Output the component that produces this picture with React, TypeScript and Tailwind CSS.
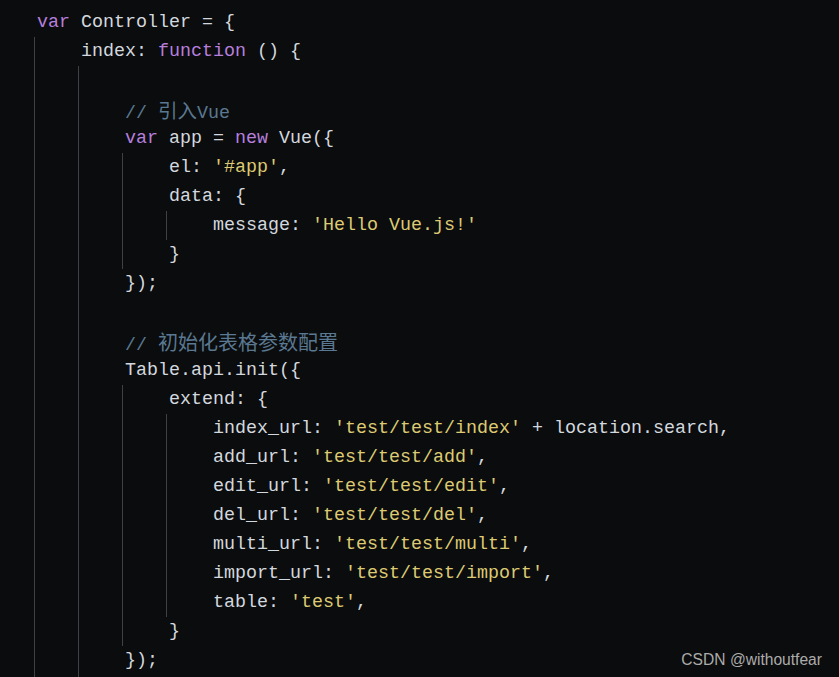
import React from "react";

type Tok = { t: string; c?: "kw" | "str" | "cm" | "cjk1" | "cjk2" };
type Line = { indent: number; toks: Tok[] };

const L = (indent: number, ...toks: Tok[]): Line => ({ indent, toks });
const p = (t: string): Tok => ({ t });
const kw = (t: string): Tok => ({ t, c: "kw" });
const s = (t: string): Tok => ({ t, c: "str" });
const cm = (t: string): Tok => ({ t, c: "cm" });

const LINES: Line[] = [
  L(0, kw("var"), p(" Controller = {")),
  L(1, p("index: "), kw("function"), p(" () {")),
  L(2),
  L(2, cm("// "), { t: "引入", c: "cjk1" }, cm("Vue")),
  L(2, kw("var"), p(" app = "), kw("new"), p(" Vue({")),
  L(3, p("el: "), s("'#app'"), p(",")),
  L(3, p("data: {")),
  L(4, p("message: "), s("'Hello Vue.js!'")),
  L(3, p("}")),
  L(2, p("});")),
  L(2),
  L(2, cm("// "), { t: "初始化表格参数配置", c: "cjk2" }),
  L(2, p("Table.api.init({")),
  L(3, p("extend: {")),
  L(4, p("index_url: "), s("'test/test/index'"), p(" + location.search,")),
  L(4, p("add_url: "), s("'test/test/add'"), p(",")),
  L(4, p("edit_url: "), s("'test/test/edit'"), p(",")),
  L(4, p("del_url: "), s("'test/test/del'"), p(",")),
  L(4, p("multi_url: "), s("'test/test/multi'"), p(",")),
  L(4, p("import_url: "), s("'test/test/import'"), p(",")),
  L(4, p("table: "), s("'test'"), p(",")),
  L(3, p("}")),
  L(2, p("});")),
  L(2),
];

const tokClass = (c?: Tok["c"]) => {
  switch (c) {
    case "kw":
      return "text-[#b67fdd]";
    case "str":
      return "text-[#ddca72]";
    case "cm":
      return "text-[#5a7891]";
    case "cjk1":
      return "text-[#5a7891] text-[19.5px] font-['Noto_Sans_CJK_SC',sans-serif]";
    case "cjk2":
      return "text-[#5a7891] text-[20px] font-['Noto_Sans_CJK_SC',sans-serif]";
    default:
      return "text-[#d3d8df]";
  }
};

export default function App() {
  return (
    <div className="relative w-[839px] h-[677px] overflow-hidden bg-[#0b0c0d] pt-[7.5px] font-['Liberation_Mono','Noto_Sans_CJK_SC',monospace] text-[18.34px]">
      {LINES.map((line, i) => (
        <div key={i} className="flex h-[29px] items-stretch pl-[34px] leading-[29px] whitespace-pre">
          {Array.from({ length: line.indent }).map((_, g) => (
            <span key={g} className="w-[44px] shrink-0 border-l border-[#3e4246]" />
          ))}
          <span className="ml-[3px]">
            {line.toks.map((tok, j) => (
              <span key={j} className={tokClass(tok.c)}>
                {tok.t}
              </span>
            ))}
          </span>
        </div>
      ))}
      <div className="absolute right-[17px] bottom-[8px] font-['Liberation_Sans',sans-serif] text-[15.6px] leading-[18px] text-[#ababab]">
        CSDN @withoutfear
      </div>
    </div>
  );
}
